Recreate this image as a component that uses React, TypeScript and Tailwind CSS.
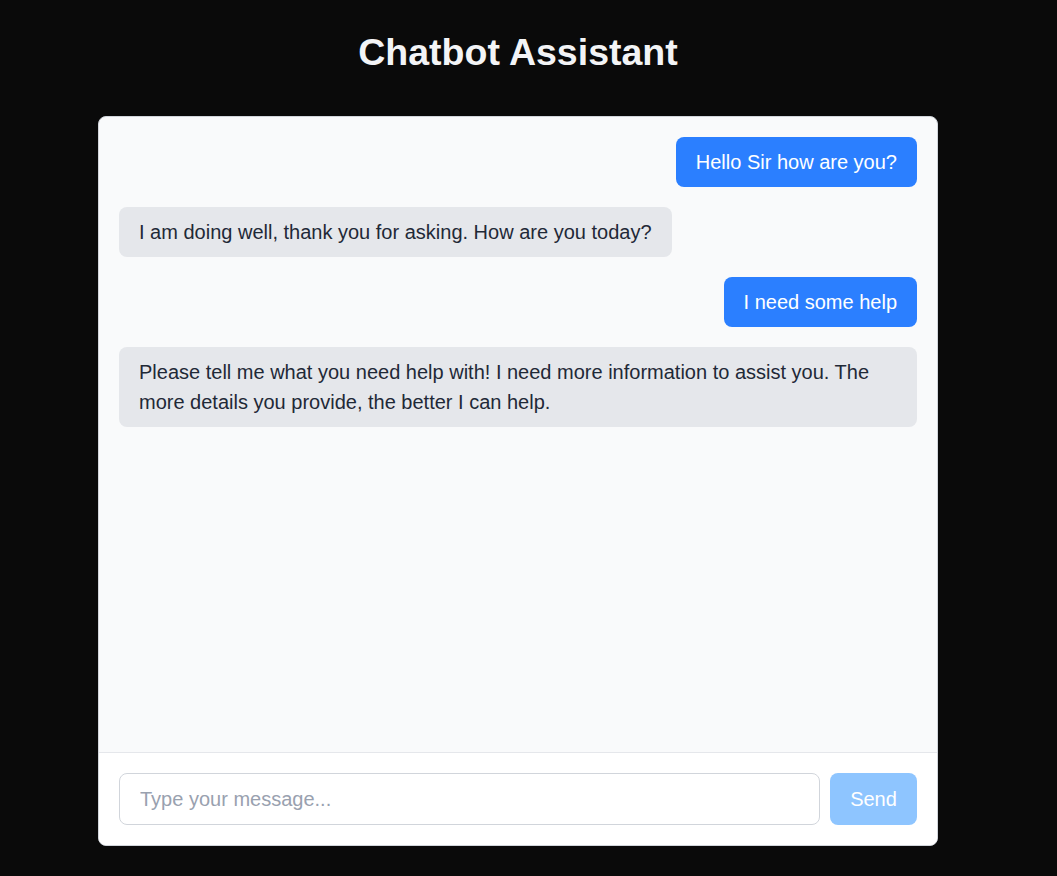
import React from "react";

const messages: { role: "user" | "bot"; text: string }[] = [
  { role: "user", text: "Hello Sir how are you?" },
  { role: "bot", text: "I am doing well, thank you for asking. How are you today?" },
  { role: "user", text: "I need some help" },
  {
    role: "bot",
    text: "Please tell me what you need help with! I need more information to assist you. The more details you provide, the better I can help.",
  },
];

export default function App() {
  return (
    <div
      className="min-h-screen bg-[#0a0a0a] pt-8 pr-[21px] pb-8"
      style={{ fontFamily: '"Liberation Sans", Arial, sans-serif' }}
    >
      <h1 className="text-center text-[37.5px] leading-10 font-bold text-[#f3f4f6]">Chatbot Assistant</h1>
      <div className="mx-auto mt-[44px] flex h-[730px] w-[840px] flex-col overflow-hidden rounded-lg border border-[#d1d5db] bg-[#f9fafb]">
        <div className="flex flex-1 flex-col gap-5 p-5">
          {messages.map((m, i) => (
            <div key={i} className={m.role === "user" ? "flex justify-end" : "flex justify-start"}>
              <div
                className={
                  m.role === "user"
                    ? "rounded-lg bg-[#2b7fff] px-5 py-2.5 text-xl leading-[30px] text-white"
                    : "rounded-lg bg-[#e5e7eb] px-5 py-2.5 text-xl leading-[30px] text-[#1f2937]"
                }
              >
                {m.text}
              </div>
            </div>
          ))}
        </div>
        <div className="flex gap-2.5 border-t border-[#e5e7eb] bg-white p-5">
          <input
            className="h-[52px] flex-1 rounded-lg border border-[#d1d5db] bg-white px-5 text-xl text-[#1f2937] outline-none placeholder:text-[#99a1af]"
            placeholder="Type your message..."
          />
          <button className="h-[52px] w-[87px] rounded-lg bg-[#8ec5ff] text-xl text-white">Send</button>
        </div>
      </div>
    </div>
  );
}
